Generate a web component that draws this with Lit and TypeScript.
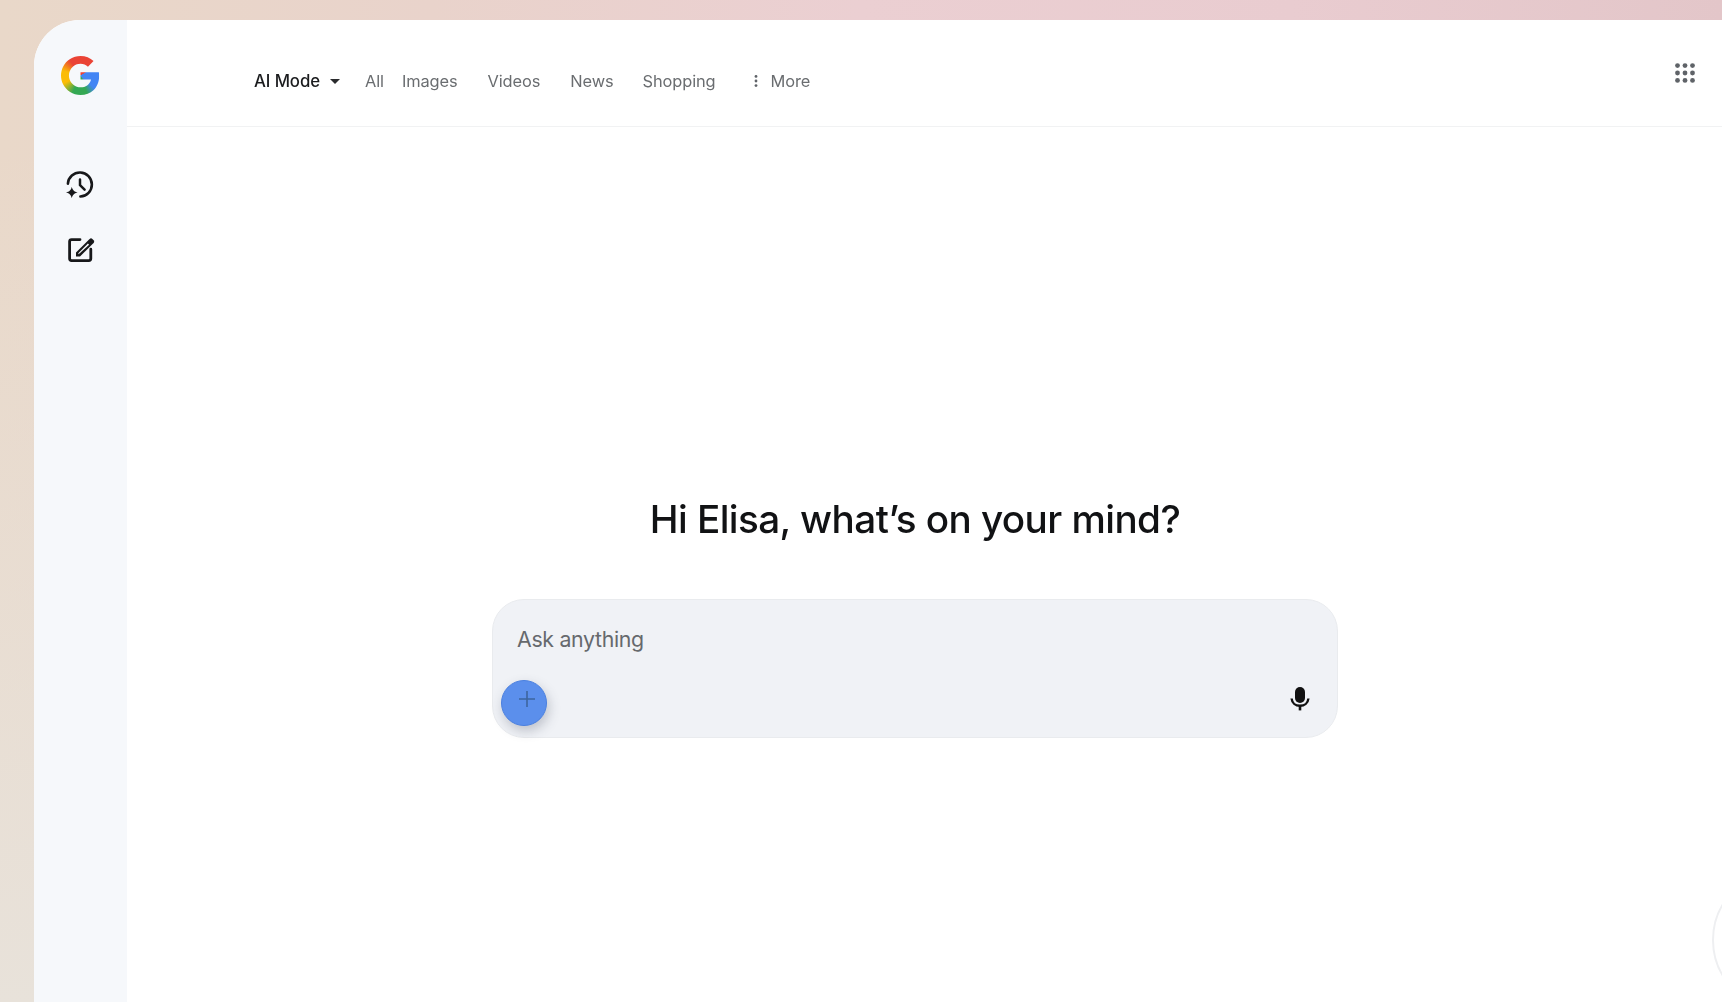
import { LitElement, html, css } from "lit";
import { customElement } from "lit/decorators.js";

@customElement("app-root")
export class AppRoot extends LitElement {
  static styles = css`
    :host {
      display: block;
      height: 1002px;
      box-sizing: border-box;
      padding: 20px 0 0 34px;
      overflow: hidden;
      position: relative;
      font-family: "Inter", "Roboto", "Noto Sans", sans-serif;
      background:
        linear-gradient(180deg, rgba(233, 228, 220, 0) 15%, #e8e2da 100%),
        linear-gradient(90deg, #e9d8c9 0%, #e9d3cb 25%, #ebcfd2 50%, #e9ccd0 75%, #e3c6c9 100%);
    }
    .window {
      display: flex;
      height: 982px;
      background: #fff;
      border-top-left-radius: 46px;
      overflow: hidden;
      position: relative;
      filter: blur(0.35px);
    }
    .rail {
      width: 93px;
      flex: none;
      background: #f6f8fb;
      display: flex;
      flex-direction: column;
      align-items: center;
    }
    .logo { margin-top: 36px; width: 39px; height: 39px; display: block; }
    .rail-icon { width: 32px; height: 32px; display: block; margin-left: -2px; }
    .history { margin-top: 74px; }
    .edit { margin-top: 31px; }
    .main { flex: 1; min-width: 0; display: flex; flex-direction: column; }
    .top {
      height: 107px;
      box-sizing: border-box;
      border-bottom: 1px solid #f1f2f3;
      display: flex;
      align-items: flex-start;
      padding: 0 24px 0 127px;
    }
    .nav {
      display: flex;
      align-items: center;
      height: 22px;
      margin-top: 50px;
      font-size: 16.4px;
      line-height: 22px;
      color: #6a6d70;
      letter-spacing: -0.1px;
    }
    .nav span { display: block; white-space: nowrap; }
    .mode { color: #1b1c1e; font-weight: 500; font-size: 16.8px; }
    .caret { margin: 0 25px 0 10px; width: 10px; height: 5px; display: block; }
    .all { margin-right: 18px; }
    .images { margin-right: 30px; }
    .videos { margin-right: 30px; }
    .news { margin-right: 29px; }
    .shopping { margin-right: 38px; }
    .dots { width: 4px; height: 14px; margin-right: 13px; display: block; }
    .apps { margin-left: auto; margin-top: 40px; width: 26px; height: 26px; display: block; }
    .body {
      flex: 1;
      display: flex;
      flex-direction: column;
      align-items: center;
      padding: 368px 19px 0 0;
    }
    h1 {
      margin: 0;
      font-size: 38.7px;
      line-height: 48px;
      font-weight: 540;
      color: #111214;
      letter-spacing: -0.58px;
      white-space: nowrap;
    }
    .box {
      margin-top: 56px;
      width: 846px;
      height: 139px;
      box-sizing: border-box;
      border: 1px solid #e9ebee;
      border-radius: 32px;
      background: #f0f2f6;
      position: relative;
      padding: 25px 24px 0;
    }
    .ph { font-size: 21.3px; line-height: 29px; color: #66696d; letter-spacing: -0.3px; }
    .mic { position: absolute; right: 22px; top: 84px; width: 30px; height: 30px; display: block; }
    .add {
      position: absolute;
      left: 8px;
      top: 80px;
      width: 46px;
      height: 46px;
      border-radius: 50%;
      box-sizing: border-box;
      border: 1px solid #4a80e0;
      background: #5b8fec;
      box-shadow: 2px 5px 12px rgba(60, 70, 90, 0.28);
      display: flex;
      align-items: center;
      justify-content: center;
    }
    .add svg { width: 18px; height: 18px; display: block; margin: -9px 0 0 5px; }
    .ring {
      position: absolute;
      left: 1678px;
      top: 850px;
      width: 140px;
      height: 140px;
      box-sizing: border-box;
      border: 2px solid #eeeff1;
      border-radius: 50%;
      background: #fff;
    }
  `;

  render() {
    return html`
      <div class="window">
        <aside class="rail">
          <svg class="logo" viewBox="0 0 48 48">
            <defs>
              <clipPath id="g">
                <path d="M24 9.5c3.54 0 6.71 1.22 9.21 3.6l6.85-6.85C35.9 2.38 30.47 0 24 0 14.62 0 6.51 5.38 2.56 13.22l7.98 6.19C12.43 13.72 17.74 9.5 24 9.5z"/>
                <path d="M46.98 24.55c0-1.57-.15-3.09-.38-4.55H24v9.02h12.94c-.58 2.96-2.26 5.48-4.78 7.18l7.73 6c4.51-4.18 7.09-10.36 7.09-17.65z"/>
                <path d="M10.53 28.59c-.48-1.45-.76-2.99-.76-4.59s.27-3.14.76-4.59l-7.98-6.19C.92 16.46 0 20.12 0 24c0 3.88.92 7.54 2.56 10.78l7.97-6.19z"/>
                <path d="M24 48c6.48 0 11.93-2.13 15.89-5.81l-7.73-6c-2.15 1.45-4.92 2.3-8.16 2.3-6.26 0-11.57-4.22-13.47-9.91l-7.98 6.19C6.51 42.62 14.62 48 24 48z"/>
              </clipPath>
            </defs>
            <g clip-path="url(#g)">
              <foreignObject x="0" y="0" width="48" height="48">
                <div xmlns="http://www.w3.org/1999/xhtml" style="width:48px;height:48px;background:conic-gradient(from 0deg at 24px 24px,#ea4335 0deg,#ea4335 55deg,#4285f4 62deg,#4285f4 132deg,#34a853 160deg,#34a853 205deg,#fbbc05 245deg,#fbbc05 285deg,#ea4335 325deg,#ea4335 360deg)"></div>
              </foreignObject>
            </g>
          </svg>
          <svg class="rail-icon history" viewBox="0 0 32 32" fill="none">
            <path d="M3.9 14.6A12 12 0 1 1 16.4 27.5" stroke="#17181a" stroke-width="2.6" stroke-linecap="round"/>
            <path d="M16 10.4v5.8l4.6 4.4" stroke="#17181a" stroke-width="2.5" stroke-linecap="round" stroke-linejoin="round"/>
            <path d="M7.8 17.8c.8 3.4 2.2 4.8 5.8 5.7-3.6.9-5 2.3-5.8 5.7-.8-3.4-2.2-4.8-5.8-5.7 3.6-.9 5-2.3 5.8-5.7z" fill="#17181a"/>
          </svg>
          <svg class="rail-icon edit" viewBox="0 0 32 32" fill="none">
            <path d="M16 7.6H7.6a2 2 0 0 0-2 2v17a2 2 0 0 0 2 2h17.2a2 2 0 0 0 2-2v-9.4" stroke="#17181a" stroke-width="2.8" stroke-linecap="round"/>
            <path d="M12 20.6v4h4L29.6 11a2 2 0 0 0 0-2.8L28.4 7a2 2 0 0 0-2.8 0z" fill="#17181a"/>
            <path d="M14.6 22.2l-.3-1 9.6-9.6 1.2 1.2z" fill="#f6f8fb"/>
          </svg>
        </aside>
        <div class="main">
          <header class="top">
            <nav class="nav">
              <span class="mode">AI Mode</span>
              <svg class="caret" viewBox="0 0 10 5"><path d="M0 0h10L5 5z" fill="#2a2b2d"/></svg>
              <span class="all">All</span>
              <span class="images">Images</span>
              <span class="videos">Videos</span>
              <span class="news">News</span>
              <span class="shopping">Shopping</span>
              <svg class="dots" viewBox="0 0 4 14"><circle cx="2" cy="2.4" r="1.4" fill="#5f6368"/><circle cx="2" cy="7" r="1.4" fill="#5f6368"/><circle cx="2" cy="11.6" r="1.4" fill="#5f6368"/></svg>
              <span>More</span>
            </nav>
            <svg class="apps" viewBox="0 0 26 26" fill="#5f6368">
              <circle cx="5.5" cy="5.6" r="2.4"/><circle cx="13" cy="5.6" r="2.4"/><circle cx="20.5" cy="5.6" r="2.4"/>
              <circle cx="5.5" cy="13" r="2.4"/><circle cx="13" cy="13" r="2.4"/><circle cx="20.5" cy="13" r="2.4"/>
              <circle cx="5.5" cy="20.4" r="2.4"/><circle cx="13" cy="20.4" r="2.4"/><circle cx="20.5" cy="20.4" r="2.4"/>
            </svg>
          </header>
          <section class="body">
            <h1>Hi Elisa, what’s on your mind?</h1>
            <div class="box">
              <div class="ph">Ask anything</div>
              <div class="add">
                <svg viewBox="0 0 18 18" fill="none"><path d="M9 1v16M1 9h16" stroke="#3d659f" stroke-width="1.6"/></svg>
              </div>
              <svg class="mic" viewBox="0 0 30 30">
                <rect x="10" y="3" width="10" height="16" rx="5" fill="#111"/>
                <path d="M6.6 14.5c.4 4.6 4 7.3 8.4 7.3s8-2.7 8.4-7.3" fill="none" stroke="#111" stroke-width="2.4"/>
                <path d="M15 21v5.4" stroke="#111" stroke-width="2.6"/>
              </svg>
            </div>
          </section>
        </div>
        <div class="ring"></div>
      </div>
    `;
  }
}
